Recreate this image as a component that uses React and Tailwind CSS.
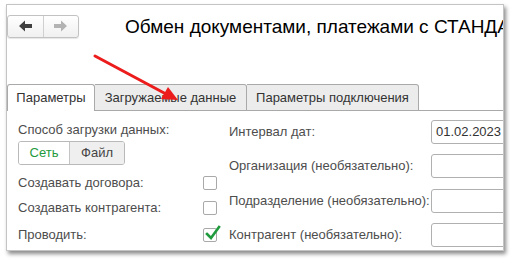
import React from "react";

function NavArrow({ dir, color }) {
  const d = dir === "left"
    ? "M0 6 L6 0.5 L6 4 L13 4 L13 8 L6 8 L6 11.5 Z"
    : "M13 6 L7 0.5 L7 4 L0 4 L0 8 L7 8 L7 11.5 Z";
  return (
    <svg width="13" height="12" viewBox="0 0 13 12">
      <path d={d} fill={color} />
    </svg>
  );
}

function Checkbox({ checked }) {
  return (
    <div className="relative w-[14px] h-[14px] border border-[#a9a9a9] rounded-[2px] bg-white">
      {checked && (
        <svg className="absolute left-[1px] top-[-4px]" width="16" height="16" viewBox="0 0 16 16">
          <path d="M2 9 L6 13 L14 2" fill="none" stroke="#1f9a3c" strokeWidth="2.6" strokeLinecap="square" />
        </svg>
      )}
    </div>
  );
}

export default function App() {
  const font = { fontFamily: '"Liberation Sans", Arial, sans-serif' };
  return (
    <div className="relative w-[514px] h-[260px] bg-white overflow-hidden" style={font}>
      <div className="ml-[6px] mt-[4px] w-[498px] h-[247px] bg-white border border-[#c4c4c4] shadow-[2px_3px_4px_rgba(0,0,0,0.45)] overflow-hidden flex flex-col">
        {/* header */}
        <div className="flex items-center h-[24px] mt-[9px]">
          <div className="shrink-0 flex w-[72px] h-[23px] border border-[#c2c2c2] rounded-[3px] bg-gradient-to-b from-white to-[#f0f0f0] shadow-[0_1px_1px_rgba(0,0,0,0.1)]">
            <div className="flex-1 flex items-center justify-center border-r border-[#d0d0d0]">
              <NavArrow dir="left" color="#404040" />
            </div>
            <div className="flex-1 flex items-center justify-center">
              <NavArrow dir="right" color="#b3b3b3" />
            </div>
          </div>
          <div className="shrink-0 ml-[46px] text-[19px] text-black whitespace-nowrap leading-none">
            Обмен документами, платежами с СТАНДАРТ
          </div>
        </div>
        {/* tabs */}
        <div className="flex mt-[46px] h-[27px] text-[13px] text-[#333]">
          <div className="w-[88px] h-[27px] flex items-center justify-center bg-white border border-b-0 border-[#a9a9a9] rounded-t-[3px]">
            Параметры
          </div>
          <div className="w-[152px] h-[27px] flex items-center justify-center bg-[#ececec] border border-l-0 border-[#a9a9a9] rounded-tr-[3px]">
            Загружаемые данные
          </div>
          <div className="w-[172px] h-[27px] flex items-center justify-center bg-[#ececec] border border-l-0 border-[#a9a9a9] rounded-tr-[3px]">
            Параметры подключения
          </div>
          <div className="flex-1 border-b border-[#a9a9a9]" />
        </div>
        {/* content */}
        <div className="flex text-[13px] text-[#4d4d4d]">
          <div className="ml-[11px] w-[199px] flex flex-col">
            <div className="mt-[11px] h-[16px] leading-[16px]">Способ загрузки данных:</div>
            <div className="mt-[3px] flex w-[107px] h-[24px] border border-[#b9b9b9] rounded-[3px] overflow-hidden">
              <div className="w-[51px] flex items-center justify-center bg-white text-[#1f9a3c] border-r border-[#c4c4c4]">Сеть</div>
              <div className="flex-1 flex items-center justify-center bg-[#efefef] text-[#444]">Файл</div>
            </div>
            <div className="mt-[6px] h-[24px] flex items-center justify-between">
              <span>Создавать договора:</span>
              <Checkbox />
            </div>
            <div className="mt-[1px] h-[24px] flex items-center justify-between">
              <span>Создавать контрагента:</span>
              <Checkbox />
            </div>
            <div className="mt-[3px] h-[24px] flex items-center justify-between">
              <span>Проводить:</span>
              <Checkbox checked />
            </div>
          </div>
          <div className="ml-[12px] flex-1 flex flex-col">
            <div className="mt-[9px] h-[24px] flex items-center">
              <span className="w-[202px]">Интервал дат:</span>
              <div className="flex-1 h-[24px] border border-[#b0b0b0] rounded-[3px] bg-white flex items-center pl-[4px] text-[#333] whitespace-nowrap overflow-hidden -mr-[4px]">
                01.02.2023
              </div>
            </div>
            <div className="mt-[10px] h-[24px] flex items-center">
              <span className="w-[202px]">Организация (необязательно):</span>
              <div className="flex-1 h-[24px] border border-[#b0b0b0] rounded-[3px] bg-white -mr-[4px]" />
            </div>
            <div className="mt-[11px] h-[24px] flex items-center">
              <span className="w-[202px] whitespace-nowrap">Подразделение (необязательно):</span>
              <div className="flex-1 h-[24px] border border-[#b0b0b0] rounded-[3px] bg-white -mr-[4px]" />
            </div>
            <div className="mt-[10px] h-[24px] flex items-center">
              <span className="w-[202px]">Контрагент (необязательно):</span>
              <div className="flex-1 h-[24px] border border-[#b0b0b0] rounded-[3px] bg-white -mr-[4px]" />
            </div>
          </div>
        </div>
      </div>
      {/* red arrow overlay */}
      <svg className="absolute left-0 top-0 pointer-events-none" width="514" height="260">
        <line x1="95" y1="56" x2="166" y2="94" stroke="#ec1c1c" strokeWidth="3" strokeLinecap="round" />
        <polygon points="178,100 161,99 168,87" fill="#ec1c1c" />
      </svg>
    </div>
  );
}
